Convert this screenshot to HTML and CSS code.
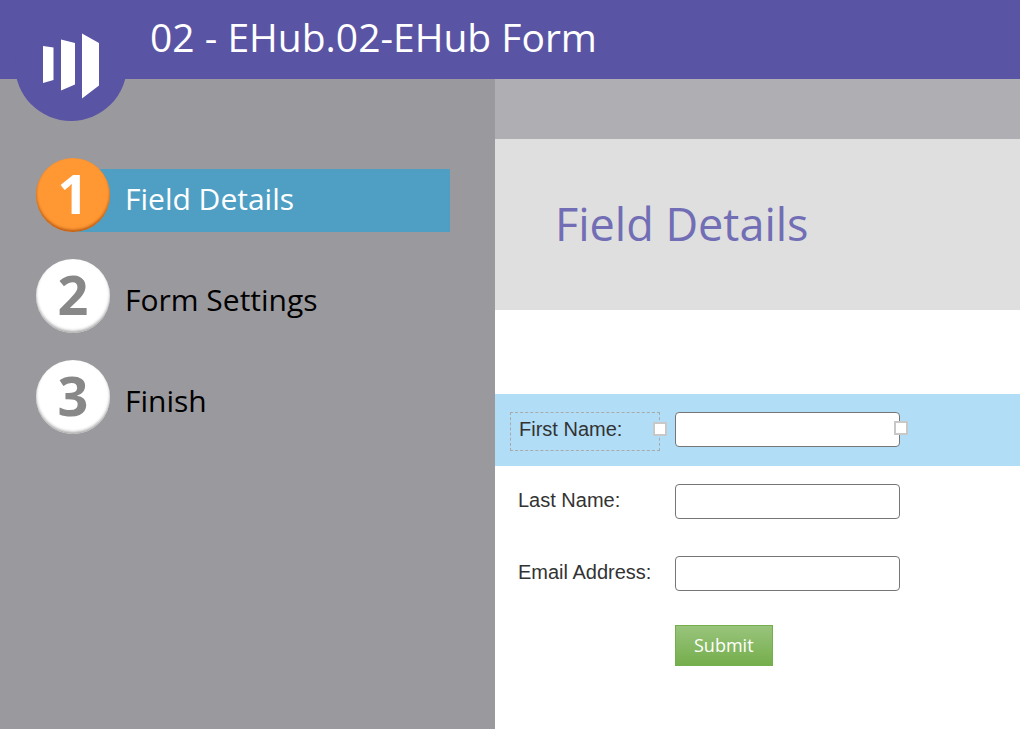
FILE: index.html
```html
<!DOCTYPE html>
<html lang="en">
<head>
  <meta charset="UTF-8" />
  <meta name="viewport" content="width=device-width, initial-scale=1" />
  <title>02 - EHub.02-EHub Form</title>
  <link rel="stylesheet" href="styles.css">
</head>
<body>
  <header class="header">
    <svg class="logo" viewBox="0 0 112 112" width="112" height="112" role="img" aria-label="Home">
      <circle cx="56" cy="56" r="56" fill="#5a54a4" />
      <path fill="#fff" d="M28 37 L38.500 38.500 V71 L28 74 Z M46 30.500 L60 34 V75.500 L46 81.500 Z M67 24.500 L84 34 V76.500 L67 89.500 Z" />
    </svg>
    <h1>02 - EHub.02-EHub Form</h1>
  </header>

  <div class="container">
    <nav class="sidebar">
      <ol class="steps">
        <li class="step active">
          <span class="number">1</span>
          <a href="#details">Field Details</a>
        </li>
        <li class="step">
          <span class="number">2</span>
          <a href="#settings">Form Settings</a>
        </li>
        <li class="step">
          <span class="number">3</span>
          <a href="#finish">Finish</a>
        </li>
      </ol>
    </nav>

    <main class="content" id="details">
      <div class="toolbar"></div>
      <div class="title">
        <h2>Field Details</h2>
      </div>

      <form class="form">
        <div class="row selected">
          <div class="field-label">
            <label for="first">First Name:</label>
            <span class="handle"></span>
          </div>
          <div class="field-input">
            <input type="text" id="first" name="first" />
            <span class="handle"></span>
          </div>
        </div>
        <div class="row">
          <div class="field-label">
            <label for="last">Last Name:</label>
          </div>
          <div class="field-input">
            <input type="text" id="last" name="last" />
          </div>
        </div>
        <div class="row">
          <div class="field-label">
            <label for="email">Email Address:</label>
          </div>
          <div class="field-input">
            <input type="text" id="email" name="email" />
          </div>
        </div>
        <div class="buttons">
          <button type="submit">Submit</button>
        </div>
      </form>
    </main>
  </div>
</body>
</html>
```
FILE: styles.css
```css
* {
  box-sizing: border-box;
}
body {
  margin: 0;
  min-height: 100vh;
  display: flex;
  flex-direction: column;
  font-family: "Open Sans", "Noto Sans", sans-serif;
  background-color: #fff;
}
h1, h2 {
  margin: 0;
  font-weight: 400;
}

/* header */
.header {
  position: relative;
  height: 79px;
  padding: 10px 20px 0 150px;
  background-color: #5a54a4;
  color: #fff;
}
.header h1 {
  font-size: 39px;
  line-height: 54px;
}
.logo {
  position: absolute;
  left: 15px;
  top: 9px;
}

.container {
  flex: 1;
  display: flex;
}

/* steps */
.sidebar {
  flex: 0 0 495px;
  padding: 79px 45px 0 36px;
  background-color: #9a999e;
}
.steps {
  display: flex;
  flex-direction: column;
  gap: 27px;
  margin: 0;
  padding: 0;
  list-style: none;
}
.step {
  display: flex;
  align-items: flex-end;
}
.number {
  z-index: 1;
  width: 74px;
  height: 74px;
  border-radius: 50%;
  background-color: #fff;
  box-shadow: inset 0 -2px 3px #aaa;
  color: #888;
  font-size: 54px;
  font-weight: 700;
  line-height: 70px;
  text-align: center;
}
.step a {
  flex: 1;
  margin-left: -37px;
  padding: 0 0 3px 52px;
  color: #000;
  font-size: 30px;
  line-height: 60px;
  text-decoration: none;
}
.step.active a {
  background-color: #4f9fc4;
  color: #fff;
}
.step.active .number {
  background-color: #ff9833;
  box-shadow: inset 0 -2px 3px #b85a14;
  color: #fff;
}

/* content */
.content {
  flex: 1;
  background-color: #fff;
}
.toolbar {
  height: 60px;
  background-color: #afaeb3;
}
.title {
  padding: 53px 60px 54px;
  background-color: #dfdfdf;
}
.title h2 {
  color: #716eb5;
  font-size: 45px;
  line-height: 64px;
}

/* form */
.form {
  padding-top: 84px;
  font-family: "Liberation Sans", Arial, sans-serif;
}
.row {
  display: flex;
  gap: 15px;
  height: 72px;
  padding: 18px 15px;
}
.row.selected {
  background-color: #b1ddf6;
}
.field-label {
  position: relative;
  width: 150px;
  padding: 4px 8px;
}
.field-label label {
  display: block;
  color: #333;
  font-size: 20px;
  line-height: 24px;
}
.selected .field-label {
  height: 39px;
  border: 1px dashed #aaa;
}
.field-input {
  position: relative;
  width: 225px;
}
.field-input input {
  display: block;
  width: 100%;
  height: 35px;
  padding: 4px 8px;
  border: 1px solid #767676;
  border-radius: 4px;
  background-color: #fff;
  font-size: 20px;
}
.handle {
  position: absolute;
  top: 9px;
  right: -8px;
  width: 14px;
  height: 14px;
  border: 2px solid #c8c8c8;
  background-color: #fff;
}
.buttons {
  padding: 15px 15px 30px 180px;
}
button {
  height: 41px;
  padding: 0 18px 2px;
  border: 1px solid #75ae4c;
  background: linear-gradient(#99c47c, #75ae4c);
  color: #fff;
  font-family: "Open Sans", "Noto Sans", sans-serif;
  font-size: 18px;
  cursor: pointer;
}
```
